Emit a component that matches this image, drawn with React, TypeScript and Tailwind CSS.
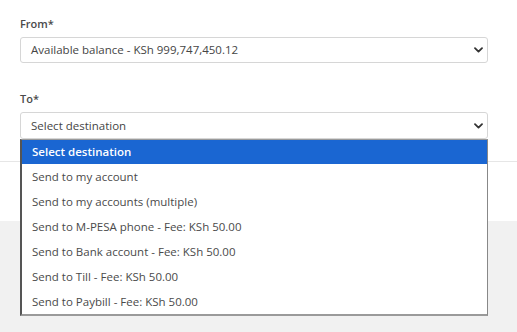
import React from "react";

const Chevron = () => (
  <svg width="9" height="6" viewBox="0 0 9 6">
    <path d="M1 1.2 L4.5 4.6 L8 1.2" fill="none" stroke="#333" strokeWidth="1.8" strokeLinecap="round" strokeLinejoin="round" />
  </svg>
);

const items = [
  "Send to my account",
  "Send to my accounts (multiple)",
  "Send to M-PESA phone - Fee: KSh 50.00",
  "Send to Bank account - Fee: KSh 50.00",
  "Send to Till - Fee: KSh 50.00",
  "Send to Paybill - Fee: KSh 50.00",
];

const Select = ({ text, h }: { text: string; h: string }) => (
  <div className={`${h} w-[468px] border border-[#d6d6d6] rounded-[3px] bg-white flex items-center justify-between pl-[10px] pr-[4px] text-[11.5px] text-[#454545]`}>
    <span>{text}</span>
    <Chevron />
  </div>
);

export default function App() {
  return (
    <div
      className="relative w-[517px] h-[332px] overflow-hidden bg-[#f1f1f1] text-[#444] flex flex-col"
      style={{ fontFamily: '"Open Sans", "Noto Sans", sans-serif' }}
    >
      <div className="bg-white border-b border-[#e6e6e6] h-[162px] px-[20px] pt-[17px] flex flex-col">
        <div className="text-[11px] font-semibold text-[#4a4a4a] leading-[14px]">From*</div>
        <div className="mt-[6px]">
          <Select text="Available balance - KSh 999,747,450.12" h="h-[26px]" />
        </div>
        <div className="text-[11px] font-semibold text-[#4a4a4a] leading-[14px] mt-[29px]">To*</div>
        <div className="mt-[6px]">
          <Select text="Select destination" h="h-[27px]" />
        </div>
      </div>
      <div className="bg-white h-[59px]" />
      <div className="absolute left-[20px] top-[139px] w-[468px] bg-white border-l-2 border-l-[#555] border-r border-r-[#888] border-b-2 border-b-[#9a9a9a] border-t border-t-[#9a9a9a] text-[11.5px] flex flex-col">
        <div className="h-[24px] bg-[#1a66d2] text-white font-semibold flex items-center pl-[10px]">Select destination</div>
        {items.map((t) => (
          <div key={t} className="h-[25px] flex items-center pl-[10px] text-[#4a4a4a]">
            {t}
          </div>
        ))}
      </div>
    </div>
  );
}
